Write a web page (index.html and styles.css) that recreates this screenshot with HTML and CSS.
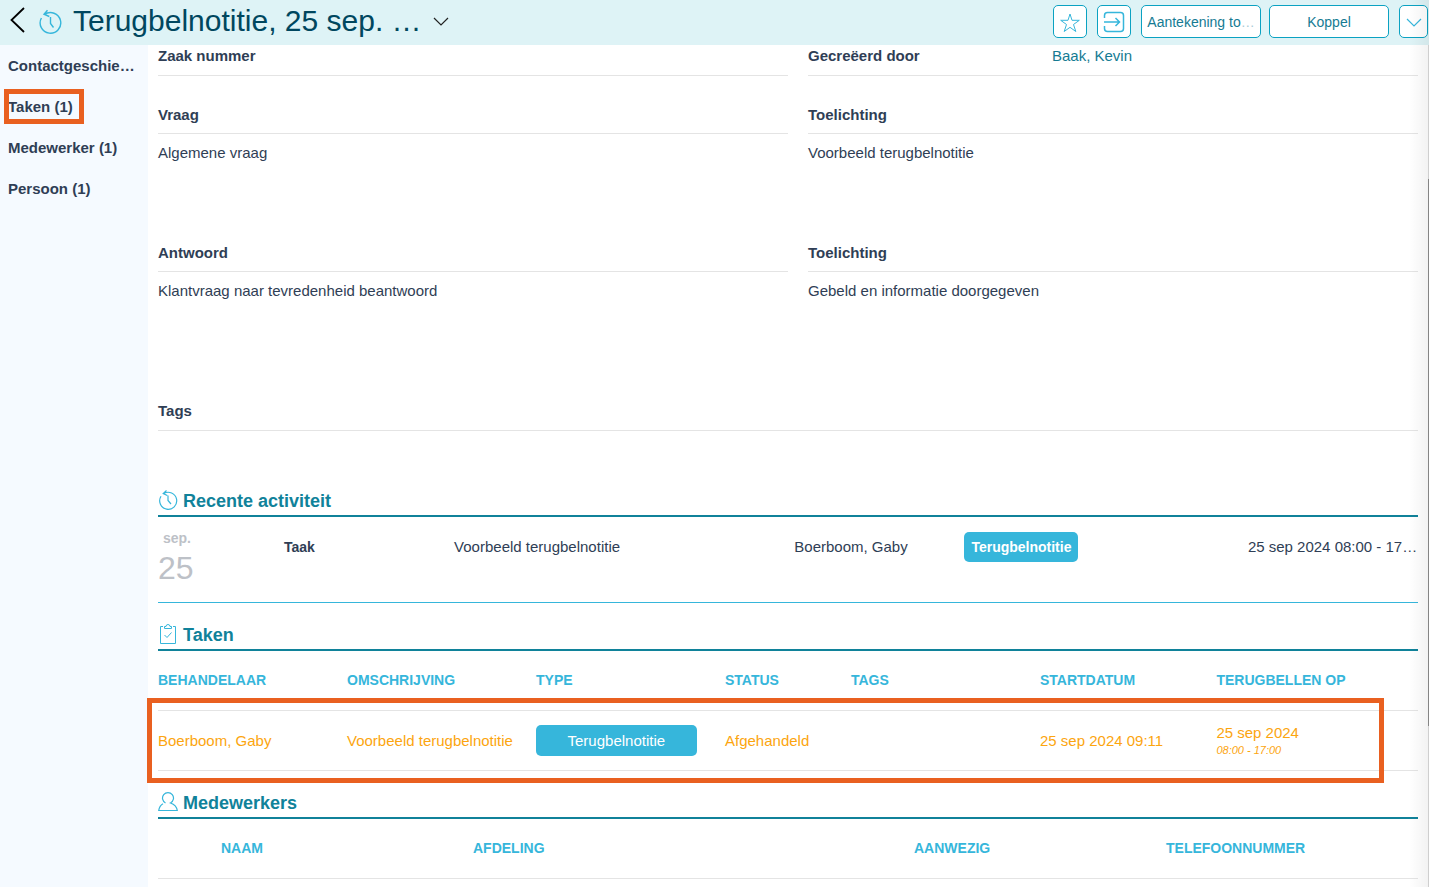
FILE: index.html
```html
<!DOCTYPE html>
<html lang="nl">
<head>
<meta charset="utf-8">
<title>Terugbelnotitie</title>
<link rel="stylesheet" href="styles.css">
</head>
<body>
<div class="app">
  <header class="topbar">
    <button class="icon-button back" aria-label="Terug"><svg width="17" height="26" viewBox="0 0 17 26"><path d="M15 1 2.500 13 15 25" fill="none" stroke="#000" stroke-width="1.800"/></svg></button>
    <svg class="title-icon" width="24" height="26" viewBox="0 0 24 26"><path d="M6.500 5.500A10.300 10.300 0 1 1 3.400 9M9.500 1.200 6 5.200 11.300 7.500M12.500 8V14.500L15.500 18.500" fill="none" stroke="#36b6db" stroke-width="1.400"/></svg>
    <h1 class="title">Terugbelnotitie, 25 sep. …</h1>
    <button class="icon-button" aria-label="Meer"><svg width="16" height="10" viewBox="0 0 16 10"><path d="M1 1 8 8 15 1" fill="none" stroke="#222" stroke-width="1.200"/></svg></button>
    <div class="actions">
      <button class="btn btn-square" aria-label="Favoriet"><svg width="22" height="22" viewBox="0 0 22 22"><path d="M11 3 13 9.300H20.300L14.500 13.500 16.800 20.500 11 16.300 5.200 20.500 7.500 13.500 1.700 9.300H9Z" fill="none" stroke="#36b6db"/></svg></button>
      <button class="btn btn-square" aria-label="Openen"><svg width="22" height="22" viewBox="0 0 22 22"><path d="M1.500 7V4.500Q1.500 1.500 4.500 1.500H17.500Q20.500 1.500 20.500 4.500V17.500Q20.500 20.500 17.500 20.500H4.500Q1.500 20.500 1.500 17.500V15M1 11H16.500M12.500 7 16.500 11 12.500 15" fill="none" stroke="#36b6db" stroke-width="1.500"/></svg></button>
      <div class="btn-pair">
        <button class="btn btn-wide">Aantekening to<span class="dots">…</span></button>
        <button class="btn btn-wide">Koppel</button>
      </div>
      <button class="btn btn-drop" aria-label="Meer acties"><svg width="16" height="10" viewBox="0 0 16 10"><path d="M1 1 8 8 15 1" fill="none" stroke="#36b6db" stroke-width="1.200"/></svg></button>
    </div>
  </header>
  <div class="body">
    <nav class="sidebar">
      <a href="#contact">Contactgeschie…</a>
      <a href="#taken" class="marked">Taken (1)</a>
      <a href="#medewerkers">Medewerker (1)</a>
      <a href="#persoon">Persoon (1)</a>
    </nav>
    <main class="content">
      <div class="fields first">
        <div class="label">Zaak nummer</div>
        <div class="label split"><span>Gecreëerd door</span><a href="#baak">Baak, Kevin</a></div>
      </div>
      <div class="fields">
        <div><div class="label">Vraag</div><p class="value">Algemene vraag</p></div>
        <div><div class="label">Toelichting</div><p class="value">Voorbeeld terugbelnotitie</p></div>
      </div>
      <div class="fields">
        <div><div class="label">Antwoord</div><p class="value tall">Klantvraag naar tevredenheid beantwoord</p></div>
        <div><div class="label">Toelichting</div><p class="value tall">Gebeld en informatie doorgegeven</p></div>
      </div>
      <div class="label tags">Tags</div>

      <section class="recent">
        <h2 class="heading"><svg width="20" height="22" viewBox="0 0 20 22"><path d="M5.700 3.600A8.500 8.500 0 1 1 3 6.300M8.500 .500 5.200 3.500 9.300 5.500M10 5.500V10.500L13 14" fill="none" stroke="#36b6db" stroke-width="1.200"/></svg>Recente activiteit</h2>
        <div class="activity">
          <div class="date"><span class="month">sep.</span><span class="day">25</span></div>
          <b class="kind">Taak</b>
          <span>Voorbeeld terugbelnotitie</span>
          <span>Boerboom, Gaby</span>
          <span><b class="badge">Terugbelnotitie</b></span>
          <span>25 sep 2024 08:00 - 17…</span>
        </div>
      </section>

      <section class="section" id="taken">
        <h2 class="heading"><svg width="20" height="22" viewBox="0 0 20 22"><path d="M5 2.500H2.500V19.500H17.500V2.500H15M6.500 4.500V2.500H8Q8 .500 10 .500T12 2.500H13.500V4.500ZM6.500 11 9 13.500 13.500 8.500" fill="none" stroke="#36b6db"/></svg>Taken</h2>
        <div class="table-wrap">
          <table class="table">
            <colgroup><col class="w15"><col class="w15"><col class="w15"><col class="w10"><col class="w15"><col class="w14"><col class="w16"></colgroup>
            <thead><tr><th>BEHANDELAAR</th><th>OMSCHRIJVING</th><th>TYPE</th><th>STATUS</th><th>TAGS</th><th>STARTDATUM</th><th>TERUGBELLEN OP</th></tr></thead>
            <tbody><tr><td>Boerboom, Gaby</td><td>Voorbeeld terugbelnotitie</td><td><span class="pill">Terugbelnotitie</span></td><td>Afgehandeld</td><td></td><td>25 sep 2024 09:11</td><td><div>25 sep 2024</div><em class="time">08:00 - 17:00</em></td></tr></tbody>
          </table>
        </div>
      </section>

      <section class="section" id="medewerkers">
        <h2 class="heading"><svg width="20" height="22" viewBox="0 0 20 22"><path d="M7.500 11A5.500 5.500 0 1 1 12.500 11Q18.500 13 19.300 18.500H.700Q1.500 13.500 5 11.700" fill="none" stroke="#36b6db" stroke-width="1.200"/></svg>Medewerkers</h2>
        <table class="table">
          <colgroup><col class="w5"><col class="w20"><col class="w35"><col class="w20"><col class="w20"></colgroup>
          <thead><tr><td></td><th>NAAM</th><th>AFDELING</th><th>AANWEZIG</th><th>TELEFOONNUMMER</th></tr></thead>
        </table>
      </section>
    </main>
  </div>
  <div class="edge-shadow"></div>
  <div class="scrollbar"><div class="thumb"></div></div>
</div>
</body>
</html>
```

FILE: styles.css
```css
* { box-sizing: border-box; }
body { margin: 0; font: 15px/20px "Liberation Sans", Arial, sans-serif; color: #2f3e55; background: #fff; }
button { font: inherit; }
a { color: inherit; text-decoration: none; }
h1, h2, p { margin: 0; }
svg { display: block; flex: none; }
.app { position: relative; height: 100vh; overflow: hidden; display: flex; flex-direction: column; }

.topbar { flex: none; display: flex; align-items: center; height: 45px; padding: 0 1px 2px 9px; background: #def3f6; }
.icon-button { border: 0; padding: 0; background: none; }
.back { margin-right: 12px; padding-bottom: 3px; }
.title { margin: 0 11px; padding-bottom: 2px; font-size: 30px; line-height: 36px; font-weight: 400; color: #00475f; white-space: nowrap; }
.actions { display: flex; gap: 10px; margin-left: auto; }
.btn-pair { display: flex; gap: 8px; }
.btn { display: flex; align-items: center; justify-content: center; height: 33px; padding: 0; border: 1px solid #0ba2c2; border-radius: 5px; background: #fff; color: #157b93; font-size: 14px; white-space: nowrap; }
.btn-square { width: 34px; }
.btn-wide { width: 120px; }
.btn-drop { width: 29px; padding-top: 3px; }
.dots { color: #a9cbd6; }

.body { flex: 1; min-height: 0; display: flex; }
.sidebar { flex: none; width: 148px; padding: 11px 8px; display: flex; flex-direction: column; align-items: flex-start; gap: 21px; background: #f5faff; font-weight: 700; white-space: nowrap; }
.marked { position: relative; }
.marked::after { content: ""; position: absolute; inset: -8px -11px -7px -4px; border: 5px solid #e96020; }

.content { flex: 1; min-width: 0; padding: 1px 11px 0 10px; }
.fields { display: grid; grid-template-columns: 63fr 61fr; gap: 20px; }
.label { padding-bottom: 8px; border-bottom: 1px solid #e4e4e4; font-weight: 700; }
.first { margin-bottom: 29px; }
.first .label, .tags { padding-bottom: 9px; }
.split { display: grid; grid-template-columns: 2fr 3fr; }
.split a { font-weight: 400; color: #157b93; }
.value { min-height: 109px; padding-top: 9px; }
.tall { min-height: 129px; }

.recent { margin-top: 58px; }
.section { margin-top: 20px; }
.heading { display: flex; align-items: center; gap: 5px; height: 28px; padding-bottom: 3px; border-bottom: 2px solid #10829a; font-size: 18px; color: #10829a; }
.activity { display: grid; grid-template-columns: 20fr 27fr 54fr 27fr 45fr 27fr; align-items: start; padding: 15px 0; border-bottom: 1px solid #36b6db; line-height: 30px; }
.activity > * { min-width: 0; white-space: nowrap; }
.date { display: flex; flex-direction: column; color: #bdc1c7; }
.month { padding-left: 5px; font-size: 14px; line-height: 12px; font-weight: 700; }
.day { padding-top: 6px; font-size: 32px; line-height: 37px; }
.kind { font-size: 14px; }
.badge { display: inline-block; vertical-align: top; padding: 0 7px; border-radius: 5px; background: #36b6db; color: #fff; font-size: 14px; }

.table-wrap { position: relative; }
.table-wrap::after { content: ""; position: absolute; inset: 47px 34px -12px -11px; border: 5px solid #e96020; }
.table { width: 100%; table-layout: fixed; border-collapse: separate; border-spacing: 0; }
th, td { height: 60px; padding: 0; border-bottom: 1px solid #e4e4e4; text-align: left; white-space: nowrap; }
th { padding-bottom: 2px; font-size: 14px; color: #36b6db; }
td { color: #fca50f; }
.pill { display: block; width: 85%; border-radius: 5px; background: #36b6db; color: #fff; line-height: 31px; text-align: center; }
.time { display: block; padding-bottom: 2px; font-size: 11px; line-height: 14px; }
.w5 { width: 5%; }
.w10 { width: 10%; }
.w14 { width: 14%; }
.w15 { width: 15%; }
.w16 { width: 16%; }
.w20 { width: 20%; }
.w35 { width: 35%; }

.edge-shadow { position: absolute; inset: 0 0 0 auto; width: 20px; background: linear-gradient(to right, rgba(0,0,0,0), rgba(0,0,0,.05)); pointer-events: none; }
.scrollbar { position: absolute; inset: 45px 0 0 auto; width: 1px; background: #cfcfcf; }
.thumb { height: 65%; margin-top: 134px; background: #858585; }
```
